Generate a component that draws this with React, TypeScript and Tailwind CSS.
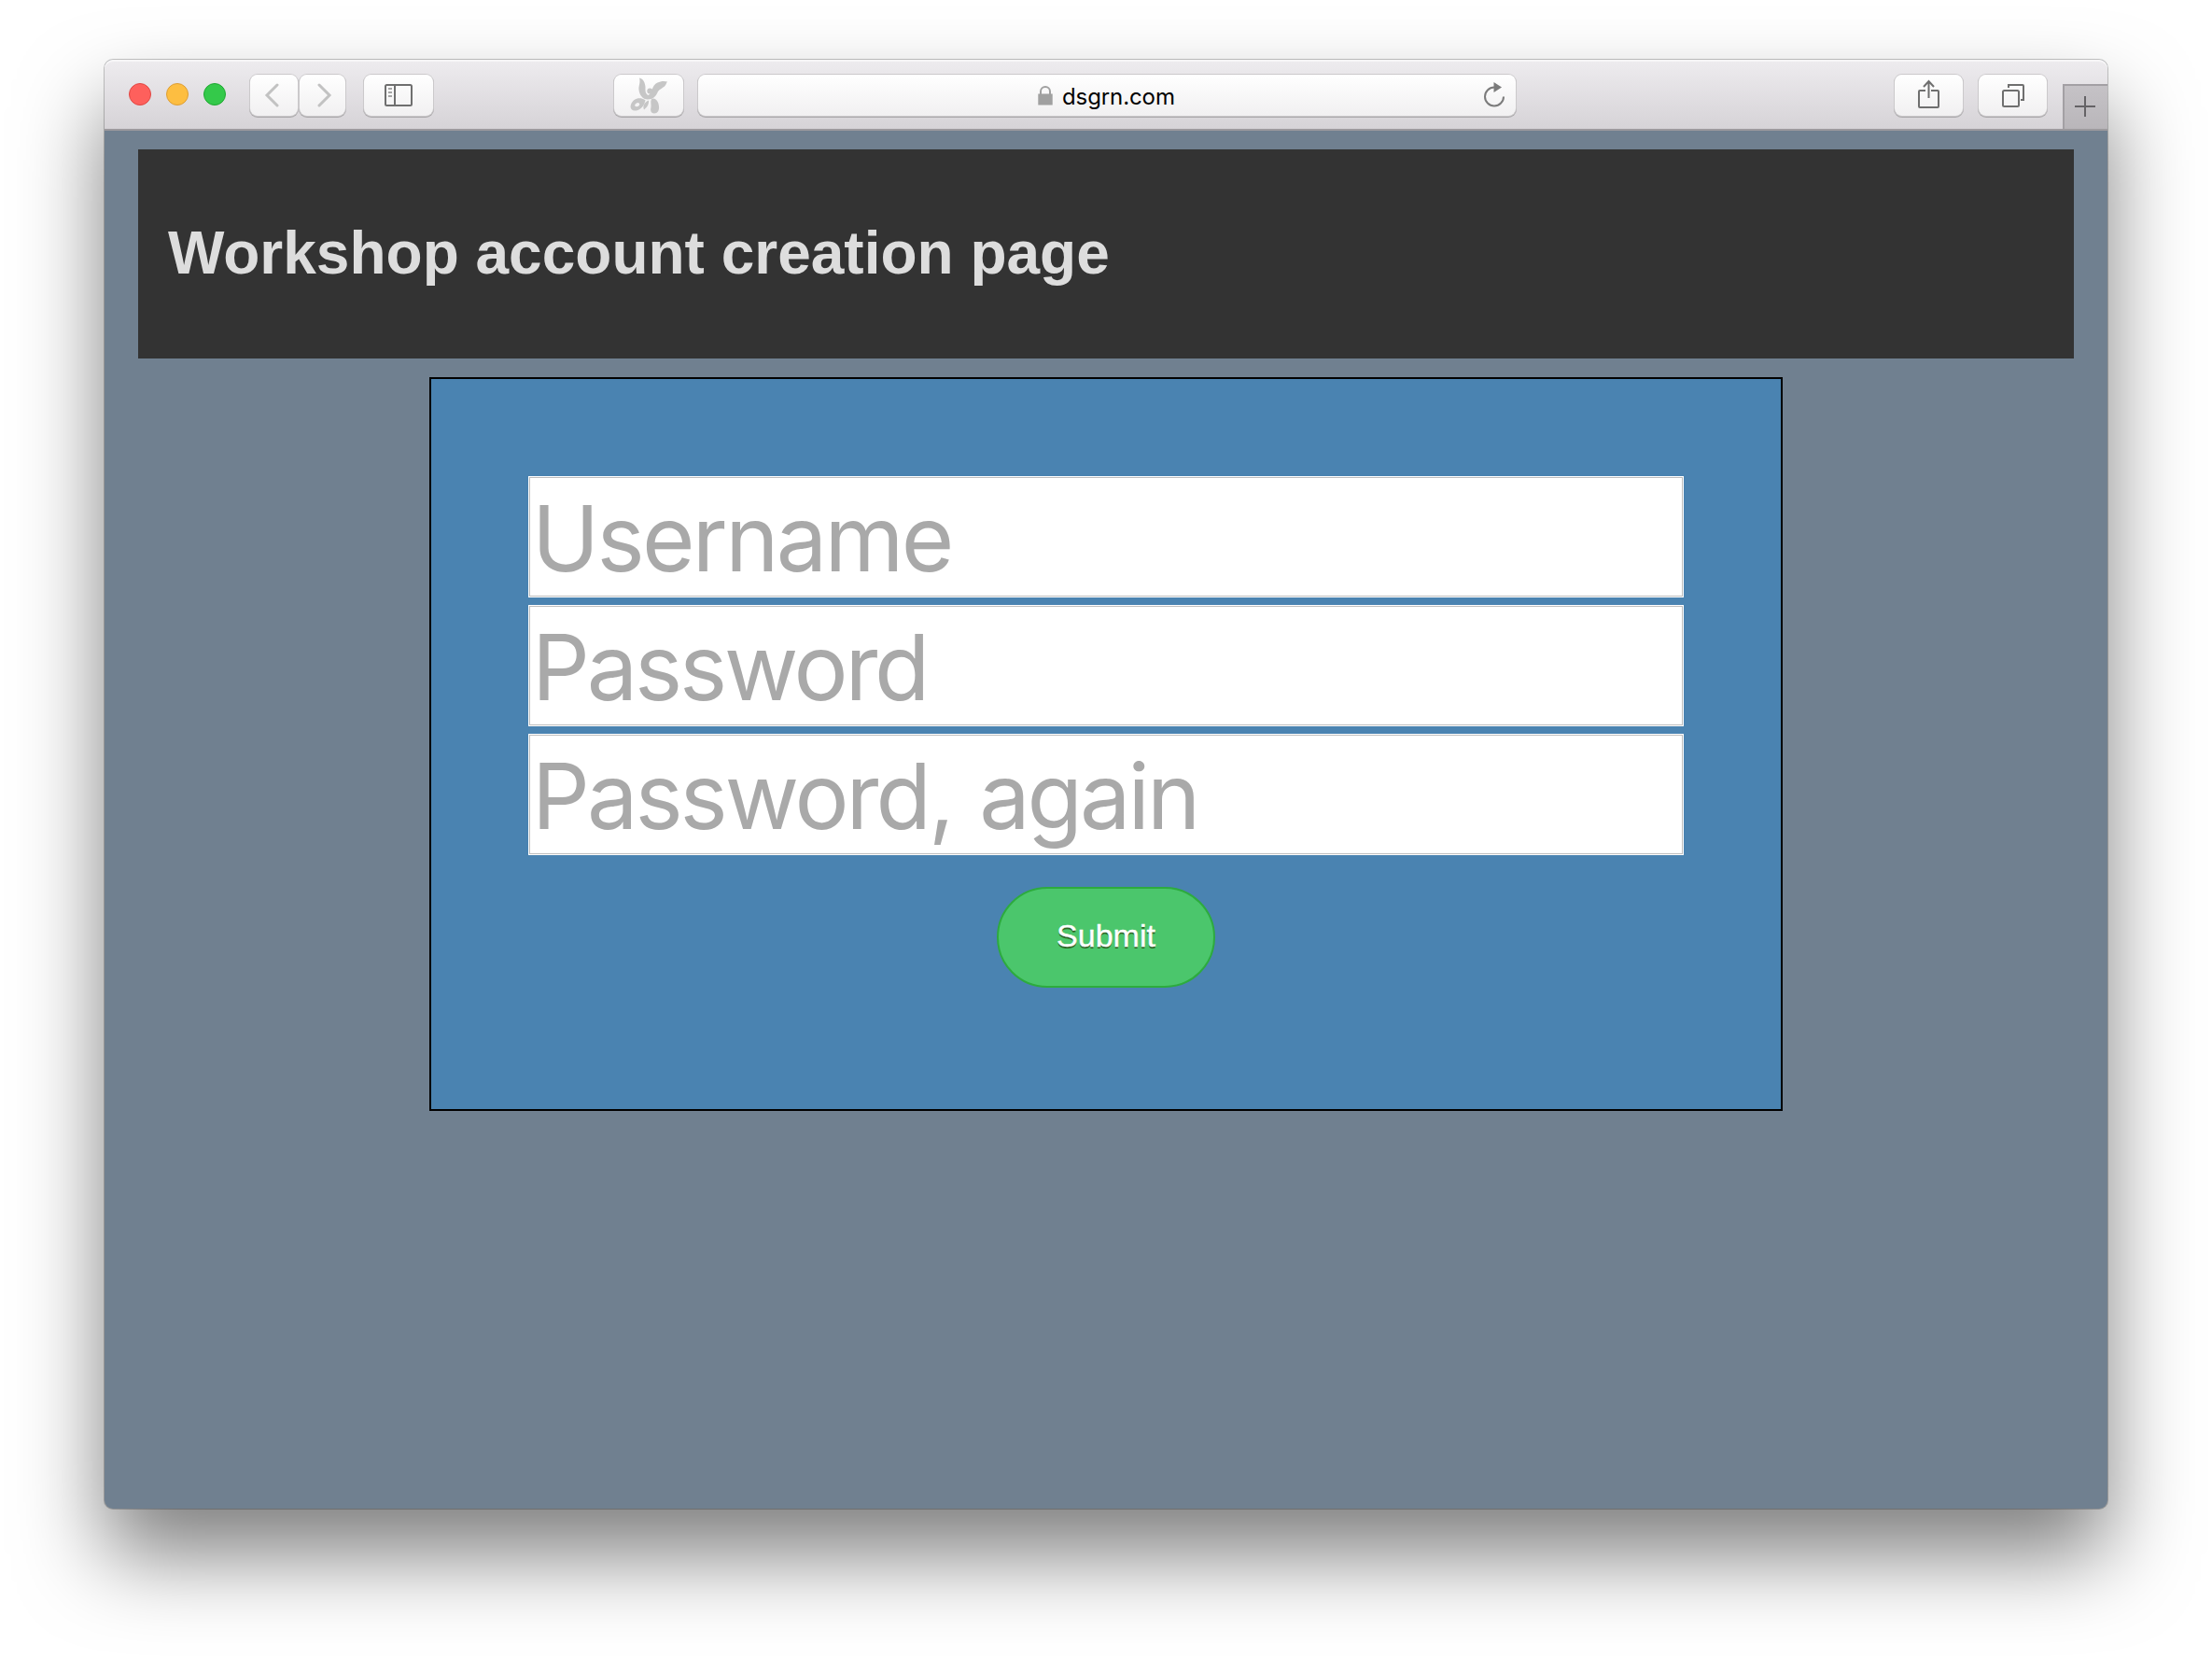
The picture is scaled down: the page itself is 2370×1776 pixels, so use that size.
import type { ReactNode } from "react";

function ToolButton({ className = "", children }: { className?: string; children?: ReactNode }) {
  return (
    <div
      className={
        "flex h-[44px] shrink-0 items-center justify-center rounded-[8px] bg-gradient-to-b from-white to-[#f1f0f1] shadow-[0_0_0_1px_#cbc9cb,0_1px_0_1px_#a9a7a9] " +
        className
      }
    >
      {children}
    </div>
  );
}

function Toolbar() {
  return (
    <div className="flex h-[76px] items-start rounded-t-[9px] border-b-2 border-[#9d9a9e] bg-gradient-to-b from-[#eeecef] to-[#d6d3d7] shadow-[inset_0_2px_0_#f7f6f7]">
      <div className="ml-[26px] mt-[25px] flex gap-4">
        <div className="size-6 rounded-full border border-[#e04743] bg-[#fe605c]" />
        <div className="size-6 rounded-full border border-[#dd9e35] bg-[#fdbe41]" />
        <div className="size-6 rounded-full border border-[#1fa831] bg-[#34c94a]" />
      </div>
      <div className="ml-[26px] mt-4 flex gap-[2px]">
        <ToolButton className="w-[51px]">
          <svg width="16" height="26" viewBox="0 0 16 26" className="-ml-[6px]" fill="none" stroke="#c2c2c2" strokeWidth="3">
            <path d="M14 2L3 13L14 24" strokeLinecap="round" />
          </svg>
        </ToolButton>
        <ToolButton className="w-[49px]">
          <svg width="16" height="26" viewBox="0 0 16 26" className="ml-[5px]" fill="none" stroke="#c2c2c2" strokeWidth="3">
            <path d="M2 2L13 13L2 24" strokeLinecap="round" />
          </svg>
        </ToolButton>
      </div>
      <ToolButton className="ml-[20px] mt-4 w-[74px]">
        <svg width="30" height="24" viewBox="0 0 30 24" fill="none">
          <rect x="1" y="1" width="28" height="22" rx="1.5" stroke="#6f6f6f" strokeWidth="2" />
          <path d="M11 1V23" stroke="#6f6f6f" strokeWidth="2" />
          <path d="M4 5H8M4 9H8M4 13H8" stroke="#a5a5a5" strokeWidth="2" />
        </svg>
      </ToolButton>
      <ToolButton className="ml-[194px] mt-4 w-[74px]">
        <svg width="41" height="39" viewBox="0 0 41 39" fill="#c6c6c6">
          <path d="M10 .5C14.5 1.5 16 5.5 16.5 10C16.500 14 16 17 19.500 19C24 17 23 8.500 29.500 5.500C32.500 4 36.500 3.500 40 4.500C38.500 6.500 38.500 9 35.500 10.500C34 12 31.500 12.500 30 15C28 20 24.500 23.500 19 23.500C13.500 23.500 10 18.500 9.500 13C9 9.500 11.500 5.500 10 .5Z" />
          <circle cx="21.300" cy="14.500" r="3" />
          <path fillRule="evenodd" d="M16 24C10 20 3 23 1 29C-.5 33 2 36 6 35.500C11 35 15 31 16.500 24.500ZM8 27C11 27 11 30 8 31C5 32 3.500 29 8 27Z" />
          <path d="M20 24.500C20.500 29 18 32 15 34.500C13.500 31 14.500 27 20 24.500Z" />
          <path d="M23 23C27 21 30.500 25 31 31C31.500 35.500 29.500 38.500 26 38.500C22.500 38.500 21.500 35 22.500 32C23 29 21.500 26 23 23Z" />
        </svg>
      </ToolButton>
      <ToolButton className="ml-4 mt-4 w-[876px]">
        <div className="flex w-full items-center pl-[364px]">
          <svg width="16" height="21" viewBox="0 0 16 21">
            <path d="M3 9V6A5 5 0 0 1 13 6V9" fill="none" stroke="#a0a0a0" strokeWidth="2" />
            <rect x="0.300" y="8.500" width="15.400" height="12" fill="#a0a0a0" />
          </svg>
          <span className="ml-[10px] mt-[4px] font-['Inter'] text-[24px] leading-[30px] tracking-[-0.1px] text-black">dsgrn.com</span>
          <svg width="24" height="28" viewBox="0 0 24 28" className="ml-auto mr-[11px]">
            <path d="M12 5.500A10 10 0 1 0 22 15.500" fill="none" stroke="#7b7b7b" strokeWidth="2" />
            <path d="M11.500 0L20 5.500L11.500 11Z" fill="#7b7b7b" />
          </svg>
        </div>
      </ToolButton>
      <ToolButton className="ml-auto mt-4 w-[73px]">
        <svg width="24" height="32" viewBox="0 0 24 32" fill="none" stroke="#6f6f6f" strokeWidth="2" className="-ml-[1px] -mt-[2px]">
          <path d="M9 12H3Q2 12 2 13V29Q2 30 3 30H22Q23 30 23 29V13Q23 12 22 12H15" />
          <path d="M12.500 20V2M7 8L12.500 2L18 8" />
        </svg>
      </ToolButton>
      <ToolButton className="ml-[17px] mt-4 w-[73px]">
        <svg width="26" height="26" viewBox="0 0 26 26" fill="none" stroke="#6f6f6f" strokeWidth="2" className="-mt-[1px]">
          <rect x="2" y="8" width="17" height="17" rx="1.500" />
          <path d="M8 5V2H23Q24 2 24 3V18H21" />
        </svg>
      </ToolButton>
      <div className="ml-[17px] mt-[26px] flex h-12 w-12 items-center justify-center border-l-2 border-t-2 border-[#a3a0a4] bg-gradient-to-b from-[#c5c2c6] to-[#b9b6ba] pb-[2px] pr-[2px]">
        <svg width="22" height="22" viewBox="0 0 22 22" stroke="#656366" strokeWidth="2">
          <path d="M11 0V22M0 11H22" />
        </svg>
      </div>
    </div>
  );
}

function Field({ label, type = "text", spacing }: { label: string; type?: string; spacing: string }) {
  return (
    <div className="h-[130px] border border-[#fff] bg-white">
      <input
        type={type}
        placeholder={label}
        className={
          "block h-full w-full border border-[#bebebe] bg-white pl-[2px] pt-[2px] font-['Inter'] text-[97px] leading-[122px] outline-none placeholder:text-[#a9a9a9] placeholder:opacity-100 " +
          spacing
        }
      />
    </div>
  );
}

export default function App() {
  return (
    <div className="h-[1776px] w-[2370px] overflow-hidden bg-white px-[112px] pt-16">
      <div className="flex h-[1552px] flex-col rounded-[9px] bg-[#708090] shadow-[0_0_0_1px_rgba(0,0,0,0.22),0_50px_90px_rgba(0,0,0,0.5)]">
        <Toolbar />
        <main className="flex flex-col px-9 pt-5 font-['Liberation_Sans']">
          <header className="flex h-[224px] items-center bg-[#333333] pb-[2px] pl-8">
            <h1 className="text-[64px] font-bold leading-[74px] text-[#dddddd]">Workshop account creation page</h1>
          </header>
          <form className="mx-auto mt-5 flex h-[786px] w-[1450px] flex-col border-2 border-black bg-[#4a83b1] px-[104px] pt-[104px]">
            <div className="flex flex-col gap-2">
              <Field label="Username" spacing="tracking-[-2.7px]" />
              <Field label="Password" type="password" spacing="tracking-[-3.2px]" />
              <Field label="Password, again" type="password" spacing="tracking-[-3px] [word-spacing:5px]" />
            </div>
            <button
              type="button"
              className="mx-auto mt-[34px] h-[108px] w-[234px] rounded-full border-2 border-[#2dab3e] bg-[#4bc66c] pb-[4px] text-[34px] text-white [-webkit-text-stroke:0.4px_white] [text-shadow:0_2px_0_#2f6627]"
            >
              Submit
            </button>
          </form>
        </main>
      </div>
    </div>
  );
}
